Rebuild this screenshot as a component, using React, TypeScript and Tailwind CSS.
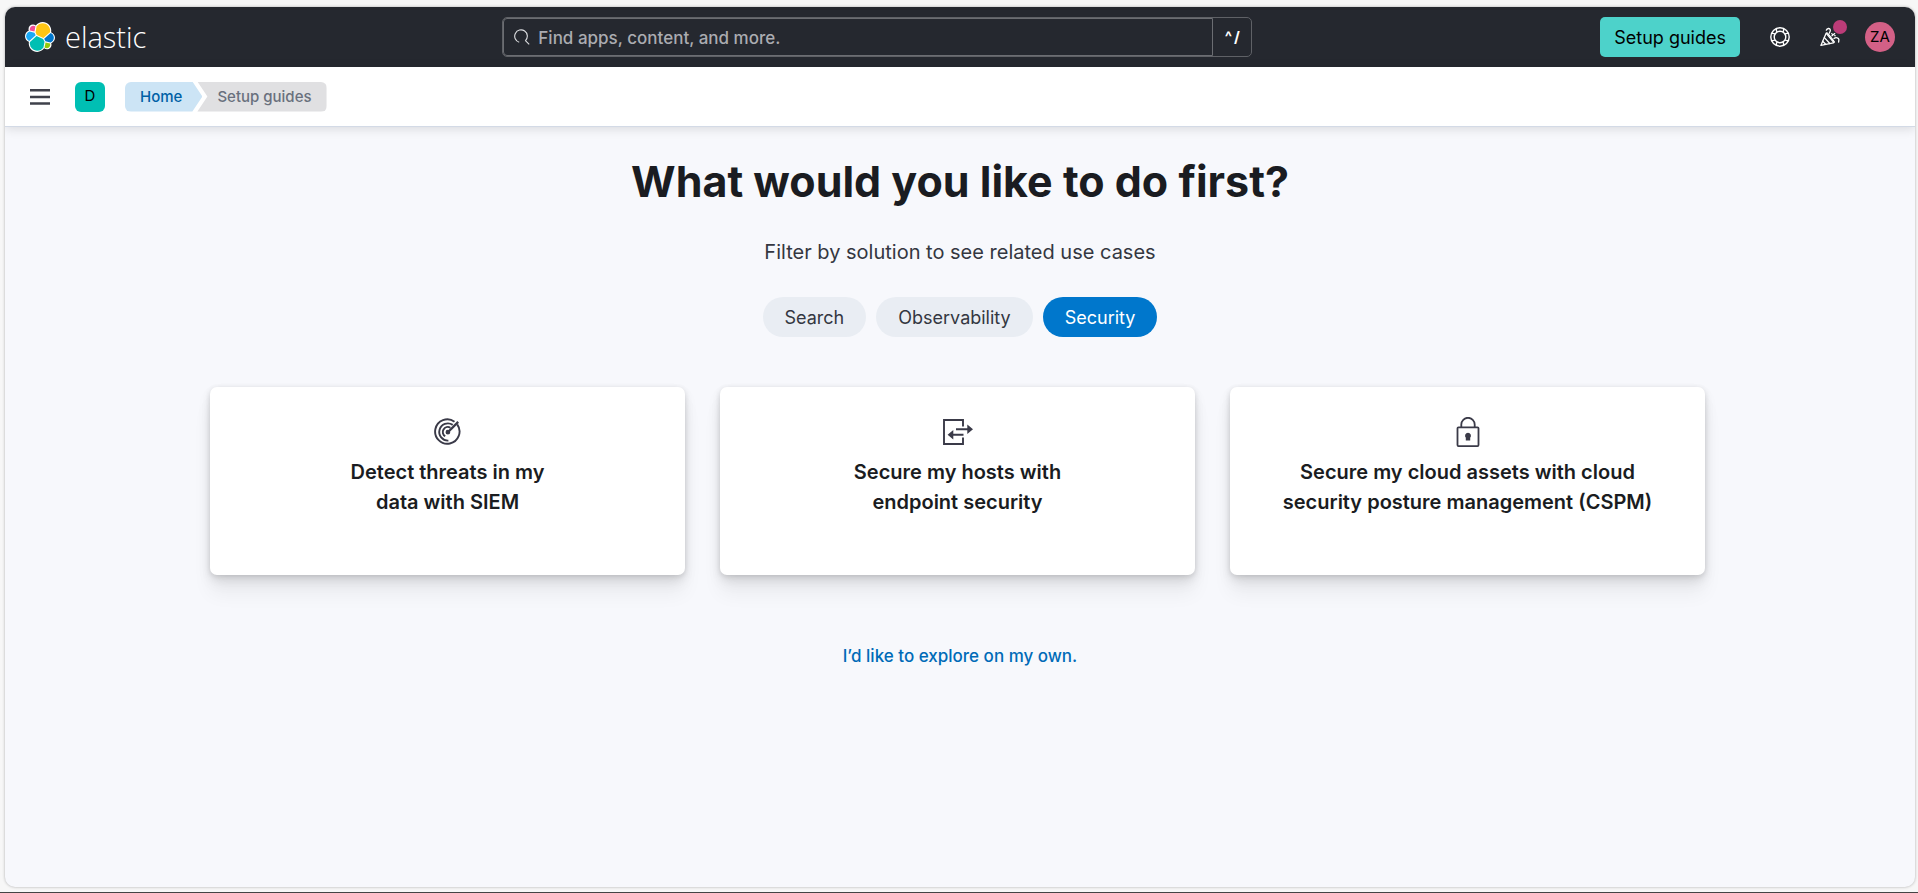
import type { ReactNode } from "react";

function ElasticMark() {
  return (
    <svg viewBox="0 0 32 32" className="size-[30px] shrink-0" aria-hidden="true">
      <path fill="#fff" d="M32 16.77c0-2.68-1.66-5.03-4.16-5.94.11-.57.16-1.15.16-1.74C28 4.08 23.92 0 18.92 0c-2.93 0-5.66 1.4-7.38 3.77-.84-.65-1.88-1.01-2.96-1.01-2.68 0-4.85 2.18-4.85 4.85 0 .59.1 1.16.3 1.7C1.66 10.12 0 12.54 0 15.14c0 2.69 1.67 5.05 4.18 5.96-.11.56-.16 1.15-.16 1.74 0 4.99 4.06 9.05 9.05 9.05 2.93 0 5.65-1.4 7.37-3.77.85.66 1.89 1.02 2.96 1.02 2.68 0 4.85-2.18 4.85-4.85 0-.59-.1-1.16-.3-1.7 2.35-.86 4.05-3.24 4.05-5.82" />
      <path fill="#FEC514" d="M12.58 13.79l7 3.2 7.07-6.19c.1-.51.15-1.03.15-1.56 0-4.35-3.54-7.89-7.89-7.89-2.6 0-5.04 1.29-6.51 3.43l-1.18 6.1z" />
      <path fill="#00BFB3" d="M5.33 21.21c-.1.51-.15 1.04-.15 1.58 0 4.37 3.56 7.93 7.93 7.93 2.63 0 5.09-1.3 6.57-3.47l1.17-6.08-1.56-2.98-7.02-3.2z" />
      <path fill="#F04E98" d="M5.29 9.09l4.8 1.13 1.05-5.46c-.65-.5-1.46-.77-2.29-.77-2.08 0-3.77 1.69-3.77 3.77 0 .46.07.91.22 1.33" />
      <path fill="#1BA9F5" d="M4.87 10.23C2.73 10.94 1.22 13 1.22 15.26c0 2.2 1.36 4.16 3.4 4.94l6.74-6.09-1.24-2.64z" />
      <path fill="#93C90E" d="M20.87 27.25c.66.5 1.45.77 2.27.77 2.08 0 3.77-1.69 3.77-3.77 0-.46-.07-.9-.22-1.32l-4.8-1.12z" />
      <path fill="#0077CC" d="M21.84 20.54l5.28 1.23c2.14-.71 3.65-2.76 3.65-5.03 0-2.19-1.36-4.15-3.4-4.93l-6.91 6.05z" />
    </svg>
  );
}

function SearchIcon() {
  return (
    <svg viewBox="0 0 16 16" className="size-4 shrink-0" fill="none" stroke="#dfe0e3" strokeWidth="1.1" aria-hidden="true">
      <path d="M5.2 13.2A6.3 6.3 0 1 1 11.5 11.600" />
      <path d="M11.2 11.400l4 4" />
    </svg>
  );
}

function HelpIcon() {
  return (
    <svg viewBox="0 0 20 20" className="size-5" fill="none" stroke="#fff" strokeWidth="1.4" aria-hidden="true">
      <circle cx="10" cy="10" r="9.2" />
      <circle cx="10" cy="10" r="5.8" />
      <path d="M6.600 1.600c-.5 1.800-.3 2.200.4 3.400M13.400 1.600c.5 1.800.3 2.200-.4 3.400M6.600 18.400c-.5-1.800-.3-2.200.4-3.400M13.400 18.400c.5-1.800.3-2.200-.4-3.400M1.600 6.600c1.800-.5 2.200-.3 3.400.4M1.600 13.400c1.800.5 2.200.3 3.400-.4M18.400 6.600c-1.800-.5-2.200-.3-3.400.4M18.400 13.400c-1.800.5-2.200.3-3.400-.4" />
    </svg>
  );
}

function CheerIcon() {
  return (
    <svg viewBox="0 0 20 20" className="size-5" fill="none" stroke="#fff" strokeWidth="1.3" strokeLinecap="round" strokeLinejoin="round" aria-hidden="true">
      <path d="M6 6.600L.9 18.400l12.500-2.600c1-.2 1.200-1 .5-1.700L7.700 6.300c-.6-.7-1.300-.5-1.700.3z" />
      <path d="M4.400 10.600l5.400 5.900M2.700 14.300l3 3M6.700 6.800l6.800 8.400" />
      <path d="M6.300 3.200C7 1.200 9.800.8 10.300 2.800c.3 1.300-.7 2.200-.9 3.200" />
      <path d="M12 8.800l2.700-2.200M11.800 6.600l.4.500M14.800 8.500l.3.300" />
      <path d="M14 11.500c2-1.400 4.800-.8 4.900 1.100.1.900-.4 1.400-.2 2.400" />
    </svg>
  );
}

function MenuIcon() {
  return (
    <svg viewBox="0 0 20 16" className="h-4 w-5" fill="#3f414b" aria-hidden="true">
      <path d="M0 0h20v2.500H0zM0 6.800h20v2.500H0zM0 13.300h20v2.500H0z" />
    </svg>
  );
}

function RadarIcon() {
  return (
    <svg viewBox="0 0 30 30" className="size-[30px]" fill="none" stroke="#3a3a48" strokeWidth="1.900" aria-hidden="true">
      <path d="M24.200 7.400A12.200 12.200 0 1 1 21.500 4.700" />
      <path d="M19.700 7.900A8.600 8.600 0 1 0 15.400 23.600" />
      <path d="M17.400 10.700A5 5 0 1 0 12.200 19.300" />
      <path d="M14.900 15.200L25.200 4.900" strokeWidth="2.300" />
      <circle cx="14.900" cy="15.200" r="1.400" fill="#3a3a48" />
    </svg>
  );
}

function EndpointIcon() {
  return (
    <svg viewBox="0 0 30 30" className="size-[30px]" fill="none" stroke="#3a3a48" strokeWidth="1.900" aria-hidden="true">
      <path d="M20 9.400V3H1v24h19v-6.400" />
      <path d="M13 12.300h12M20.500 17.800H9" />
      <path d="M24.300 7.500v9.600l5.700-4.800zM10.300 13v9.600l-5.700-4.800z" fill="#3a3a48" stroke="none" />
    </svg>
  );
}

function LockIcon() {
  return (
    <svg viewBox="0 0 30 30" className="size-[30px]" fill="none" stroke="#3a3a48" strokeWidth="1.800" aria-hidden="true">
      <rect x="4.500" y="10.300" width="21" height="18.800" rx="1" />
      <path d="M8.300 10V7.500a6.700 6.700 0 0 1 13.400 0V10" />
      <path d="M15 15.800a3 3 0 0 1 2.200 5v2.700h-4.400v-2.700a3 3 0 0 1 2.200-5z" fill="#3a3a48" stroke="none" />
    </svg>
  );
}

function Header() {
  return (
    <header className="flex h-[60px] items-center justify-between bg-[#25282f] px-5">
      <a href="#home" className="flex items-center gap-[10px] pr-2 text-white">
        <ElasticMark />
        <span className="font-['Open_Sans',sans-serif] text-[29px] leading-8 font-light">elastic</span>
      </a>
      <div className="flex h-10 w-[750px] rounded-[5px] border border-[#5f6166]">
        <label className="flex min-w-0 grow items-center gap-2 rounded-l-[4px] border border-[#6b6d72] px-[10px]">
          <SearchIcon />
          <input
            type="search"
            aria-label="Find apps, content, and more."
            placeholder="Find apps, content, and more."
            className="h-full min-w-0 grow bg-transparent pt-px text-[17px] font-medium text-white outline-none placeholder:text-[#abacb1]"
          />
        </label>
        <kbd className="flex w-[38px] items-center justify-center gap-[2px] font-['Inter',sans-serif] text-[15px] font-bold text-white">
          <span>^</span>
          <span>/</span>
        </kbd>
      </div>
      <div className="flex items-center">
        <button type="button" className="h-10 rounded-[5px] bg-[#4dd2ca] px-[14px] text-[18px] text-black">
          Setup guides
        </button>
        <button type="button" aria-label="Help" className="ml-[15px] flex h-[50px] w-[50px] items-center justify-center">
          <HelpIcon />
        </button>
        <button type="button" aria-label="What's new" className="relative flex h-[50px] w-[50px] items-center justify-center">
          <CheerIcon />
          <span className="absolute top-2 right-2 size-[14px] rounded-full bg-[#bc3c78]" />
        </button>
        <button type="button" className="ml-[10px] size-[30px] rounded-full bg-[#d36086] text-[15px] text-black">
          ZA
        </button>
      </div>
    </header>
  );
}

function Breadcrumbs() {
  return (
    <div className="relative flex h-[60px] items-center border-b border-[#d3dae6] bg-white px-[15px] shadow-[0_2px_10px_rgba(0,0,0,0.12)]">
      <button type="button" aria-label="Toggle navigation" className="flex size-10 items-center justify-center">
        <MenuIcon />
      </button>
      <button type="button" className="ml-[15px] size-[30px] rounded-[6px] bg-[#00bfb3] text-[15px] text-black">
        D
      </button>
      <nav aria-label="Breadcrumbs" className="ml-5 flex text-[15px] leading-[30px] font-medium">
        <a href="#home" className="rounded-l-[6px] bg-[#cce4f5] pr-5 pl-[15px] text-[#0061a6] [clip-path:polygon(0_0,calc(100%-10px)_0,100%_50%,calc(100%-10px)_100%,0_100%)]">
          Home
        </a>
        <span aria-current="page" className="-ml-[5px] rounded-r-[6px] bg-[#e0e0e2] pr-[15px] pl-5 text-[#69707d] [clip-path:polygon(0_0,100%_0,100%_100%,0_100%,10px_50%)]">
          Setup guides
        </span>
      </nav>
    </div>
  );
}

const solutions = ["Search", "Observability", "Security"];

const guides: { icon: ReactNode; lines: [string, string] }[] = [
  { icon: <RadarIcon />, lines: ["Detect threats in my", "data with SIEM"] },
  { icon: <EndpointIcon />, lines: ["Secure my hosts with", "endpoint security"] },
  { icon: <LockIcon />, lines: ["Secure my cloud assets with cloud", "security posture management (CSPM)"] },
];

export default function App() {
  return (
    <div className="flex min-h-screen flex-col border-b border-[#444] bg-[#f7f7f7] pt-[7px] pr-[3px] pb-[5px] pl-[5px] font-['Inter',sans-serif]">
      <div className="flex grow flex-col overflow-hidden rounded-[10px] bg-[#f7f8fc] shadow-[0_0_3px_rgba(0,0,0,0.3)]">
        <Header />
        <Breadcrumbs />
        <main className="flex flex-col items-center px-10 pt-[29px]">
          <h1 className="text-[43px] leading-[50px] font-bold text-[#1a1c21]">What would you like to do first?</h1>
          <p className="mt-[31px] text-[20px] leading-[30px] text-[#343741]">Filter by solution to see related use cases</p>
          <div className="mt-[30px] flex gap-[10px]">
            {solutions.map((name) => (
              <button
                key={name}
                type="button"
                aria-pressed={name === "Security"}
                className="h-10 rounded-full bg-[#e9edf3] px-[22px] text-[18px] text-[#343741] aria-pressed:bg-[#0077cc] aria-pressed:text-white"
              >
                {name}
              </button>
            ))}
          </div>
          <div className="mt-[50px] grid w-full max-w-[1500px] grid-cols-3 gap-[35px] pr-[5px]">
            {guides.map((guide) => (
              <button
                key={guide.lines[0]}
                type="button"
                className="flex h-[188px] flex-col items-center rounded-[7px] bg-white pt-[30px] text-[20px] leading-[30px] font-semibold text-[#1a1c21] shadow-[0_1px_5px_rgba(0,0,0,0.1),0_4px_10px_rgba(0,0,0,0.08),0_7px_15px_rgba(0,0,0,0.06),0_19px_19px_rgba(0,0,0,0.05)]"
              >
                {guide.icon}
                <span className="mt-[10px]">{guide.lines[0]}</span>
                <span>{guide.lines[1]}</span>
              </button>
            ))}
          </div>
          <a href="#explore" className="mt-[66px] text-[17px] leading-[30px] font-medium text-[#006bb8]">
            I’d like to explore on my own.
          </a>
        </main>
      </div>
    </div>
  );
}
